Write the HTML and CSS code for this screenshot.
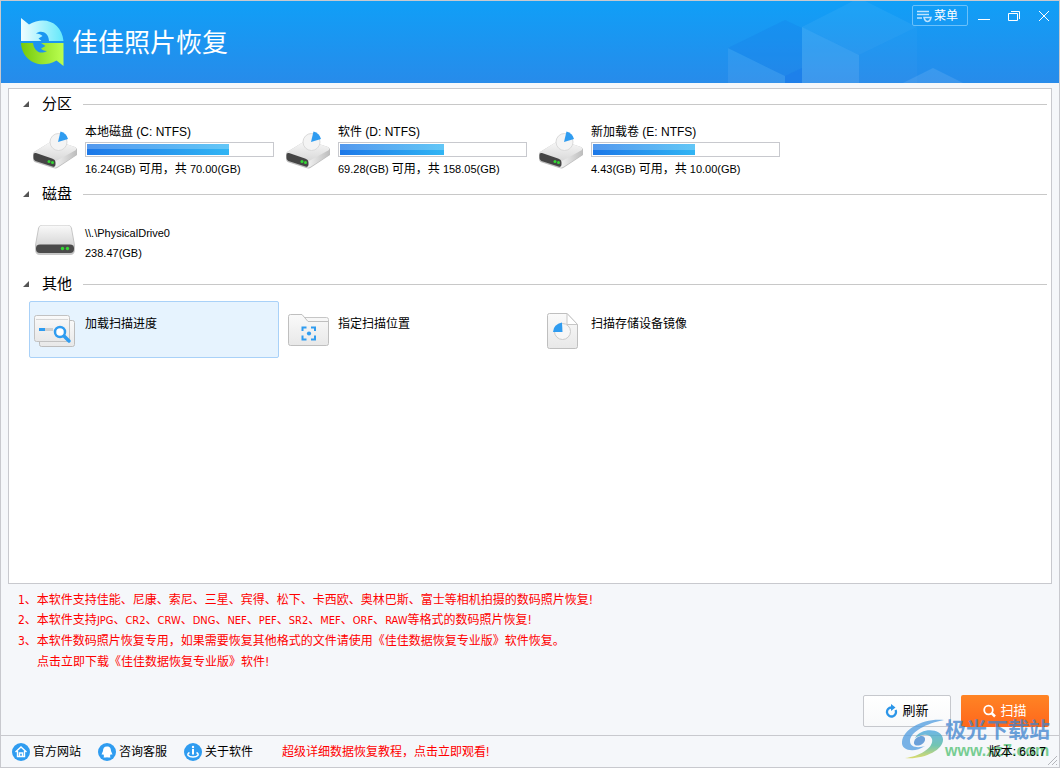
FILE: index.html
```html
<!DOCTYPE html>
<html lang="zh-CN">
<head>
<meta charset="utf-8">
<title>佳佳照片恢复</title>
<link rel="stylesheet" href="styles.css">
</head>
<body>
<svg width="0" height="0" class="defs" aria-hidden="true">
  <defs>
    <linearGradient id="metal" x1="0" y1="0" x2="0" y2="1"><stop offset="0" stop-color="#f9f9f9"/><stop offset="1" stop-color="#d8d8d8"/></linearGradient>
    <linearGradient id="paper" x1="0" y1="0" x2="0" y2="1"><stop offset="0" stop-color="#fafafa"/><stop offset="1" stop-color="#e8e8e8"/></linearGradient>
    <linearGradient id="side" x1="0" y1="0" x2="1" y2="0"><stop offset="0" stop-color="#f4f4f4"/><stop offset="1" stop-color="#bcbcbc"/></linearGradient>
    <symbol id="volume" viewBox="0 0 46 40">
      <path d="M2 22 L20 11 Q22 10 25 11 L43 17 Q45 18 45 20 L45 25 L26 37.500 Q24 39 21 38 L4 32.500 Q1 31.500 1 28.500 L1 25 Q1 23 2 22Z" fill="#bdbdbd"/>
      <path d="M23 30 L45 19 L45 24.500 L26 36.500 Q24 38 22 37.500Z" fill="url(#side)"/>
      <path d="M2 22 L20 11 Q22 10 25 11 L43 17 Q45 18 44 20 L25 30.500 Q23 31.500 20 30 L3 24Z" fill="url(#metal)"/>
      <path d="M1.500 25 Q1.500 22.500 4 23 L20 28.500 Q23.500 29.500 23.500 32.500 L23.500 34.500 Q23.500 37.500 20.500 36.500 L5 31.500 Q1.500 30.500 1.500 27.500Z" fill="#454545"/>
      <circle cx="17" cy="31.500" r="1.500" fill="#35d835"/><circle cx="20.500" cy="32.500" r="1.500" fill="#35d835"/>
      <circle cx="26.500" cy="12" r="8.500" fill="#f4f4f4" stroke="#dadada"/>
      <path d="M26 12 L28.500 1.500 Q34.500 3 36 9Z" fill="#2f9cf0"/>
    </symbol>
    <symbol id="disk" viewBox="0 0 46 40">
      <path d="M6 7.500 Q7 4 10 4 H36 Q39 4 40 7.500 L43 24 V28 Q43 34 38 34 H8 Q3 34 3 28 V24Z" fill="#c6c6c6"/>
      <path d="M7 7.500 Q7.500 4.500 10 4.500 H36 Q38.500 4.500 39 7.500 L42 24 H4Z" fill="url(#metal)"/>
      <rect x="4" y="23.500" width="38" height="8.500" rx="4" fill="#4b4b4b"/>
      <circle cx="30.500" cy="27.500" r="1.700" fill="#35d835"/><circle cx="35.500" cy="27.500" r="1.700" fill="#35d835"/>
    </symbol>
  </defs>
</svg>
<div class="window">
  <header class="header">
    <svg class="cubes" viewBox="0 0 360 82" aria-hidden="true">
      <g fill="#fff">
        <path d="M29 47 86 75V82H29Z" fill-opacity=".07"/>
        <path d="M29 47 86 19 103 27V67L86 75Z" fill="#1672e8" fill-opacity=".2"/>
        <path d="M86 75 103 67V82H86Z" fill="#1672e8" fill-opacity=".45"/>
        <path d="M103 26 154 0H166L218 26 160 54Z" fill-opacity=".05"/>
        <path d="M103 26 160 54V82H103Z" fill-opacity=".11"/>
        <path d="M160 54 218 26V82H160Z" fill-opacity=".025"/>
        <path d="M204 82 234 67 264 82Z" fill-opacity=".1"/>
      </g>
    </svg>
    <div class="brand">
      <svg width="46" height="50" viewBox="0 0 46 50" aria-hidden="true">
        <defs>
          <linearGradient id="aqua" x1="0" y1="0" x2="1" y2="0"><stop offset="0" stop-color="#effdff"/><stop offset="1" stop-color="#62e8fb"/></linearGradient>
          <linearGradient id="lime" x1="0" y1="0" x2="1" y2="0"><stop offset="0" stop-color="#75c90c"/><stop offset="1" stop-color="#baff50"/></linearGradient>
        </defs>
        <path d="M0 0 8 6.500C24-3 41 5 42.500 23H28C27.500 14 20 12 15 15.500C18 15.500 20 16.500 21.500 18L17.500 20.500 20.500 23H0Z" fill="url(#aqua)"/>
        <path d="M0 25H12C13 33 19 37 26 33C23 33 21 32 20 30.500L24.500 28 20 25H42.500V48L35.500 42.500C19 52 1 43 0 25Z" fill="url(#lime)"/>
      </svg>
      <h1>佳佳照片恢复</h1>
    </div>
    <div class="controls">
      <button class="menu" type="button">
        <svg width="16" height="14" viewBox="0 0 16 14" fill="none" stroke="#bfe4ff" aria-hidden="true"><path d="M0 2.500H12M0 5.500H12M0 9H5" stroke-width="1.500"/><path d="M7 8.500H14Q13 12.500 10.500 12.500Q8 12.500 7 8.500Z" stroke-width="1.500"/></svg>菜单
      </button>
      <button class="ctl" type="button" aria-label="最小化"><svg width="12" height="12" viewBox="0 0 12 12"><path d="M0 9.500H12"/></svg></button>
      <button class="ctl" type="button" aria-label="还原"><svg width="12" height="12" viewBox="0 0 12 12"><path d="M.5 3.500H9.500V10.500H.5ZM3 1.500H11.500V9"/></svg></button>
      <button class="ctl" type="button" aria-label="关闭"><svg width="12" height="12" viewBox="0 0 12 12"><path d="M1 1 11 11M11 1 1 11"/></svg></button>
    </div>
  </header>

  <main class="panel">
    <section>
      <h2><button type="button" aria-expanded="true">分区</button></h2>
      <div class="items">
        <button class="item volume" type="button">
          <svg width="46" height="40"><use href="#volume"/></svg>
          <span class="info"><span class="name">本地磁盘 (C: NTFS)</span><span class="bar"><span class="fill" style="width:77%"></span></span><span class="size">16.24(GB) <span class="cjk">可用，共</span> 70.00(GB)</span></span>
        </button>
        <button class="item volume" type="button">
          <svg width="46" height="40"><use href="#volume"/></svg>
          <span class="info"><span class="name">软件 (D: NTFS)</span><span class="bar"><span class="fill" style="width:56%"></span></span><span class="size">69.28(GB) <span class="cjk">可用，共</span> 158.05(GB)</span></span>
        </button>
        <button class="item volume" type="button">
          <svg width="46" height="40"><use href="#volume"/></svg>
          <span class="info"><span class="name">新加载卷 (E: NTFS)</span><span class="bar"><span class="fill" style="width:55%"></span></span><span class="size">4.43(GB) <span class="cjk">可用，共</span> 10.00(GB)</span></span>
        </button>
      </div>
    </section>
    <section>
      <h2><button type="button" aria-expanded="true">磁盘</button></h2>
      <div class="items">
        <button class="item disk" type="button">
          <svg width="46" height="40"><use href="#disk"/></svg>
          <span class="info"><span>\\.\PhysicalDrive0</span><span>238.47(GB)</span></span>
        </button>
      </div>
    </section>
    <section>
      <h2><button type="button" aria-expanded="true">其他</button></h2>
      <div class="items">
        <button class="item selected" type="button">
          <svg width="46" height="40" viewBox="0 0 46 40">
            <rect x="7.500" y="9.500" width="35" height="26" rx="2" fill="url(#paper)" stroke="#bdbdbd"/>
            <rect x="2.500" y="4.500" width="35" height="26" rx="2" fill="url(#paper)" stroke="#c2c2c2"/>
            <path d="M4 8.500H36" stroke="#d6d6d6"/><path d="M7 18.500H13" stroke="#2f9cf0" stroke-width="3"/><path d="M13 18.500H21" stroke="#cfcfcf" stroke-width="3"/>
            <path d="M32 25 37 30" stroke="#2f9cf0" stroke-width="3.500" stroke-linecap="round"/><circle cx="28" cy="21" r="5" fill="#fff" stroke="#2f9cf0" stroke-width="2.500"/>
          </svg>
          <span class="info">加载扫描进度</span>
        </button>
        <button class="item" type="button">
          <svg width="46" height="40" viewBox="0 0 46 40">
            <path d="M18 6.500H41.500Q43.500 6.500 43.500 8.500V19H18Z" fill="#f7f7f7" stroke="#c6c6c6"/>
            <path d="M3.500 5.500Q3.500 3.500 5.500 3.500H17L23 10.500H43.500V32.500Q43.500 34.500 41.500 34.500H5.500Q3.500 34.500 3.500 32.500Z" fill="url(#paper)" stroke="#bfbfbf"/>
            <path d="M17.500 20V16.500H21.500M26 16.500H30V20M30 24.500V28.500H26M21.500 28.500H17.500V24.500" fill="none" stroke="#2f9cf0" stroke-width="2"/><circle cx="24" cy="22.500" r="2.100" fill="#2f9cf0"/>
          </svg>
          <span class="info">指定扫描位置</span>
        </button>
        <button class="item" type="button">
          <svg width="46" height="40" viewBox="0 0 46 40">
            <path d="M11.500 2.500H29L39.500 13.500V35.500Q39.500 37.500 37.500 37.500H11.500Q9.500 37.500 9.500 35.500V4.500Q9.500 2.500 11.500 2.500Z" fill="url(#paper)" stroke="#bfbfbf"/>
            <path d="M29 2.500V13.500H39.500Z" fill="#fff" stroke="#c6c6c6"/>
            <circle cx="24.500" cy="20.500" r="8" fill="#f7f7f7" stroke="#cacaca"/><path d="M24.500 21H15Q15.500 13 24 11.500Z" fill="#2f9cf0"/>
          </svg>
          <span class="info">扫描存储设备镜像</span>
        </button>
      </div>
    </section>
  </main>

  <div class="notes">
    <p>1、本软件支持佳能、尼康、索尼、三星、宾得、松下、卡西欧、奥林巴斯、富士等相机拍摄的数码照片恢复!</p>
    <p>2、本软件支持<span class="fmt">JPG</span>、<span class="fmt">CR2</span>、<span class="fmt">CRW</span>、<span class="fmt">DNG</span>、<span class="fmt">NEF</span>、<span class="fmt">PEF</span>、<span class="fmt">SR2</span>、<span class="fmt">MEF</span>、<span class="fmt">ORF</span>、<span class="fmt">RAW</span>等格式的数码照片恢复!</p>
    <p>3、本软件数码照片恢复专用，如果需要恢复其他格式的文件请使用《佳佳数据恢复专业版》软件恢复。</p>
    <p class="download"><a href="#download">点击立即下载《佳佳数据恢复专业版》软件!</a></p>
  </div>

  <div class="actions">
    <button class="refresh" type="button">
      <svg width="13" height="14" viewBox="0 0 13 14" aria-hidden="true"><path d="M6.500 3.500A4.500 4.500 0 1 0 10.500 6" fill="none" stroke="#2b95e8" stroke-width="2.300"/><path d="M6 0V7L10.500 3.500Z" fill="#2b95e8"/></svg>刷新
    </button>
    <button class="scan" type="button">
      <svg width="13" height="14" viewBox="0 0 13 14" fill="none" stroke="#fff" stroke-width="1.800" aria-hidden="true"><circle cx="5.500" cy="6" r="4.300"/><path d="M8.500 9 12 12.500" stroke-width="2.500"/></svg>扫描
    </button>
  </div>

  <footer class="footer">
    <a href="#site"><svg width="18" height="18" viewBox="0 0 18 18"><circle cx="9" cy="9" r="9" fill="#2f9cf0"/><path d="M3.500 9 9 4 14.500 9M5.500 8V13.500H12.500V8M7.500 13V10H10.500V13" fill="none" stroke="#fff" stroke-width="1.400"/></svg>官方网站</a>
    <a href="#service"><svg width="18" height="18" viewBox="0 0 18 18"><circle cx="9" cy="9" r="9" fill="#2f9cf0"/><path d="M9 3.500C6 3.500 5 5.500 5 8L3.500 11.500 5.500 11.500 6 13 5.500 14.500H8.500L9 14 9.500 14.500H12.500L12 13 12.500 11.500 14.500 11.500 13 8C13 5.500 12 3.500 9 3.500Z" fill="#fff"/></svg>咨询客服</a>
    <a href="#about"><svg width="18" height="18" viewBox="0 0 18 18"><circle cx="9" cy="9" r="9" fill="#2f9cf0"/><path d="M9 6V11.500" stroke="#fff" stroke-width="2"/><circle cx="9" cy="4" r="1.200" fill="#fff"/><path d="M5.500 9.500C2 11.500 4.500 14 9 14S16 11.500 12.500 9.500" fill="none" stroke="#fff" stroke-width="1.500"/></svg>关于软件</a>
    <a class="tutorial" href="#tutorial">超级详细数据恢复教程，点击立即观看!</a>
    <span class="version">版本: 6.6.7</span>
  </footer>

  <div class="watermark">
    <svg width="44" height="42" viewBox="0 0 44 42" aria-hidden="true">
      <defs><linearGradient id="swirl" x1="0" y1="0" x2="0" y2="1"><stop offset="0" stop-color="#3fa0e0"/><stop offset=".55" stop-color="#47b59a"/><stop offset="1" stop-color="#d3d23c"/></linearGradient></defs>
      <path d="M43 2C22 0 2 11 1 24C0 33 14 35 24 28C18 30 9 30 9 23C9 14 26 5 43 2Z" fill="#4f9ce0"/>
      <path d="M14 20C20 9 41 10 42 21C43 32 22 42 4 40C20 38 33 29 31 21C29 15 20 16 14 20Z" fill="url(#swirl)"/>
      <path d="M13 24C15 17 25 16 24 22C23 28 12 30 13 24Z" fill="#3d83cf"/>
    </svg>
    <div class="mark-text"><span class="mark-name">极光下载站</span><span class="mark-url">www.xz7.com</span></div>
  </div>
  <svg class="grip" width="11" height="11" viewBox="0 0 11 11" stroke="#b4b6bb" aria-hidden="true"><path d="M1 10 10 1M5 10 10 5M9 10 10 9"/></svg>
</div>
</body>
</html>
```
FILE: styles.css
```css
* { box-sizing: border-box; }
body {
  margin: 0;
  font: 12px/20px "Liberation Sans", "Noto Sans CJK SC", sans-serif;
  color: #000;
}
h1, h2, p { margin: 0; font-weight: 400; }
button { margin: 0; padding: 0; border: 0; background: none; font: inherit; color: inherit; text-align: left; }
a { color: inherit; text-decoration: none; }
svg { flex: none; display: block; }
.defs { position: absolute; }

.window {
  position: relative;
  display: flex;
  flex-direction: column;
  min-height: 100vh;
  border: 1px solid #c8c9ce;
  background: #f5f7fa;
}

.header {
  position: relative;
  display: flex;
  justify-content: space-between;
  align-items: flex-start;
  height: 82px;
  background: linear-gradient(#109ff7, #278bea);
  color: #fff;
}
.cubes { position: absolute; top: 0; right: 0; width: 360px; height: 82px; }
.brand { display: flex; align-items: center; gap: 5px; padding: 17px 0 0 20px; }
.brand h1 { font-size: 26px; line-height: 48px; font-weight: 400; }
.controls { position: relative; display: flex; align-items: center; gap: 18px; padding: 4px 9px 0 0; }
.menu {
  display: flex;
  align-items: center;
  gap: 1px;
  width: 56px;
  height: 21px;
  margin-right: -8px;
  padding-left: 4px;
  border: 1px solid #6bc1fa;
  border-radius: 2px;
}
.ctl svg { fill: none; stroke: #fff; }

.panel {
  flex: 1;
  margin: 5px 7px 0;
  padding: 5px 4px 0 14px;
  border: 1px solid #c8c9ce;
  background: #fff;
}
.panel section { padding-bottom: 6px; }
.panel h2 { display: flex; align-items: center; font-size: 15px; line-height: 20px; gap: 11px; }
.panel h2::after { content: ""; flex: 1; border-top: 1px solid #c8c8c8; }
.panel h2 button { display: flex; align-items: center; gap: 13px; }
.panel h2 button::before {
  content: "";
  width: 6px;
  height: 6px;
  background: #555;
  clip-path: polygon(100% 0, 100% 100%, 0 100%);
}
.items { display: flex; gap: 3px; padding: 7px 0 0 6px; }
.item {
  display: flex;
  align-items: flex-start;
  gap: 7px;
  width: 250px;
  height: 57px;
  padding: 9px 4px 0 2px;
  border: 1px solid transparent;
  border-radius: 2px;
}
.item.selected { border-color: #a9d1f8; background: #e6f3fe; }
.item .info { padding-top: 3px; }
.item.volume { padding-top: 0; }
.item.volume svg { margin-top: 8px; }
.item.volume .info { padding: 0; }
.info { display: flex; flex-direction: column; flex: 1; }
.size { font-size: 11px; line-height: 24px; }
.cjk { font-size: 12px; }
.bar { width: 189px; height: 15px; padding: 1px; border: 1px solid #c8c9ce; background: #fff; }
.fill {
  display: block;
  height: 11px;
  background: linear-gradient(rgba(255,255,255,.24) 50%, transparent 50%), linear-gradient(90deg, #1d78e8, #31b5f4);
}
.item.disk .info { padding-top: 2px; font-size: 11px; }

.notes {
  padding: 6px 17px 0;
  font-family: "DejaVu Sans Condensed", "Noto Sans CJK SC", sans-serif;
  color: #f00;
}
.notes .fmt { font-size: 11px; }
.notes .download { padding: 1px 0 0 19px; }

.actions { display: flex; justify-content: flex-end; gap: 10px; padding: 23px 10px 8px; }
.actions button {
  display: flex;
  justify-content: center;
  align-items: center;
  gap: 4px;
  width: 88px;
  height: 32px;
  border-radius: 2px;
  font-size: 13px;
}
.refresh { border: 1px solid #c6c8cd; background: linear-gradient(#fff, #f8f9fa); }
.scan { background: linear-gradient(#ff8424, #ff671c); }
.actions .scan { color: #fff; }

.footer {
  display: flex;
  align-items: center;
  gap: 17px;
  height: 32px;
  padding: 0 13px 0 11px;
  border-top: 1px solid #c8c9ce;
}
.footer a { display: flex; align-items: center; gap: 3px; }
.footer .tutorial { padding-left: 12px; color: #f00; }
.version { position: relative; z-index: 2; margin-left: auto; }

.watermark {
  position: absolute;
  right: 9px;
  bottom: 7px;
  display: flex;
  align-items: center;
  opacity: .75;
  pointer-events: none;
}
.mark-text { display: flex; flex-direction: column; }
.mark-name { color: #3d83cf; font-size: 21px; line-height: 24px; font-weight: 700; }
.mark-url { color: #4ec070; font-size: 16px; line-height: 18px; font-weight: 700; }
.grip { position: absolute; right: 1px; bottom: 1px; }
```
